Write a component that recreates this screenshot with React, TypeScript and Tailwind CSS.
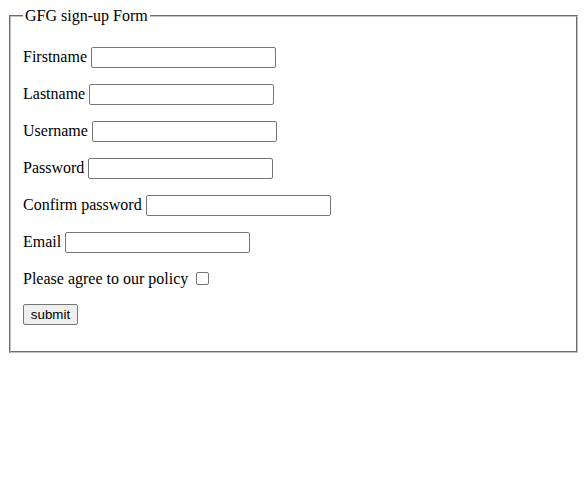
import React from "react";

const inputCls =
  "inline-block align-baseline w-[185px] h-[21px] border border-[#767676] rounded-[2px] bg-white px-[2px] py-[1px] text-[13.33px] [font-family:'Liberation_Sans',Arial,sans-serif]";

function Row({ label, type = "text" }: { label: string; type?: string }) {
  return (
    <p className="my-4 leading-[normal]">
      <label>{label}</label> <input type={type} className={inputCls} />
    </p>
  );
}

export default function App() {
  return (
    <div className="mx-2 mt-[7px] mb-2 bg-white text-black text-base [font-family:'Liberation_Serif','Times_New_Roman',serif]">
      <form>
        <fieldset className="ml-px mr-0 pt-[5.6px] px-3 pb-[10px] [border:2px_groove_rgb(192,192,192)]">
          <legend className="px-[2px] leading-[normal]">GFG sign-up Form</legend>
          <Row label="Firstname" />
          <Row label="Lastname" />
          <Row label="Username" />
          <Row label="Password" type="password" />
          <Row label="Confirm password" type="password" />
          <Row label="Email" type="email" />
          <p className="mt-[17px] mb-4 leading-[normal]">
            <label>Please agree to our policy</label>{" "}
            <input
              type="checkbox"
              className="appearance-none inline-block align-[-1px] w-[13px] h-[13px] ml-[4px] mr-[3px] border border-[#767676] rounded-[2px] bg-white"
            />
          </p>
          <p className="my-4 leading-[normal]">
            <button
              type="button"
              className="w-[55px] h-[21px] px-[6px] py-[1px] border border-[#767676] rounded-[2px] bg-[#efefef] text-[13.33px] [font-family:'Liberation_Sans',Arial,sans-serif]"
            >
              submit
            </button>
          </p>
        </fieldset>
      </form>
    </div>
  );
}
